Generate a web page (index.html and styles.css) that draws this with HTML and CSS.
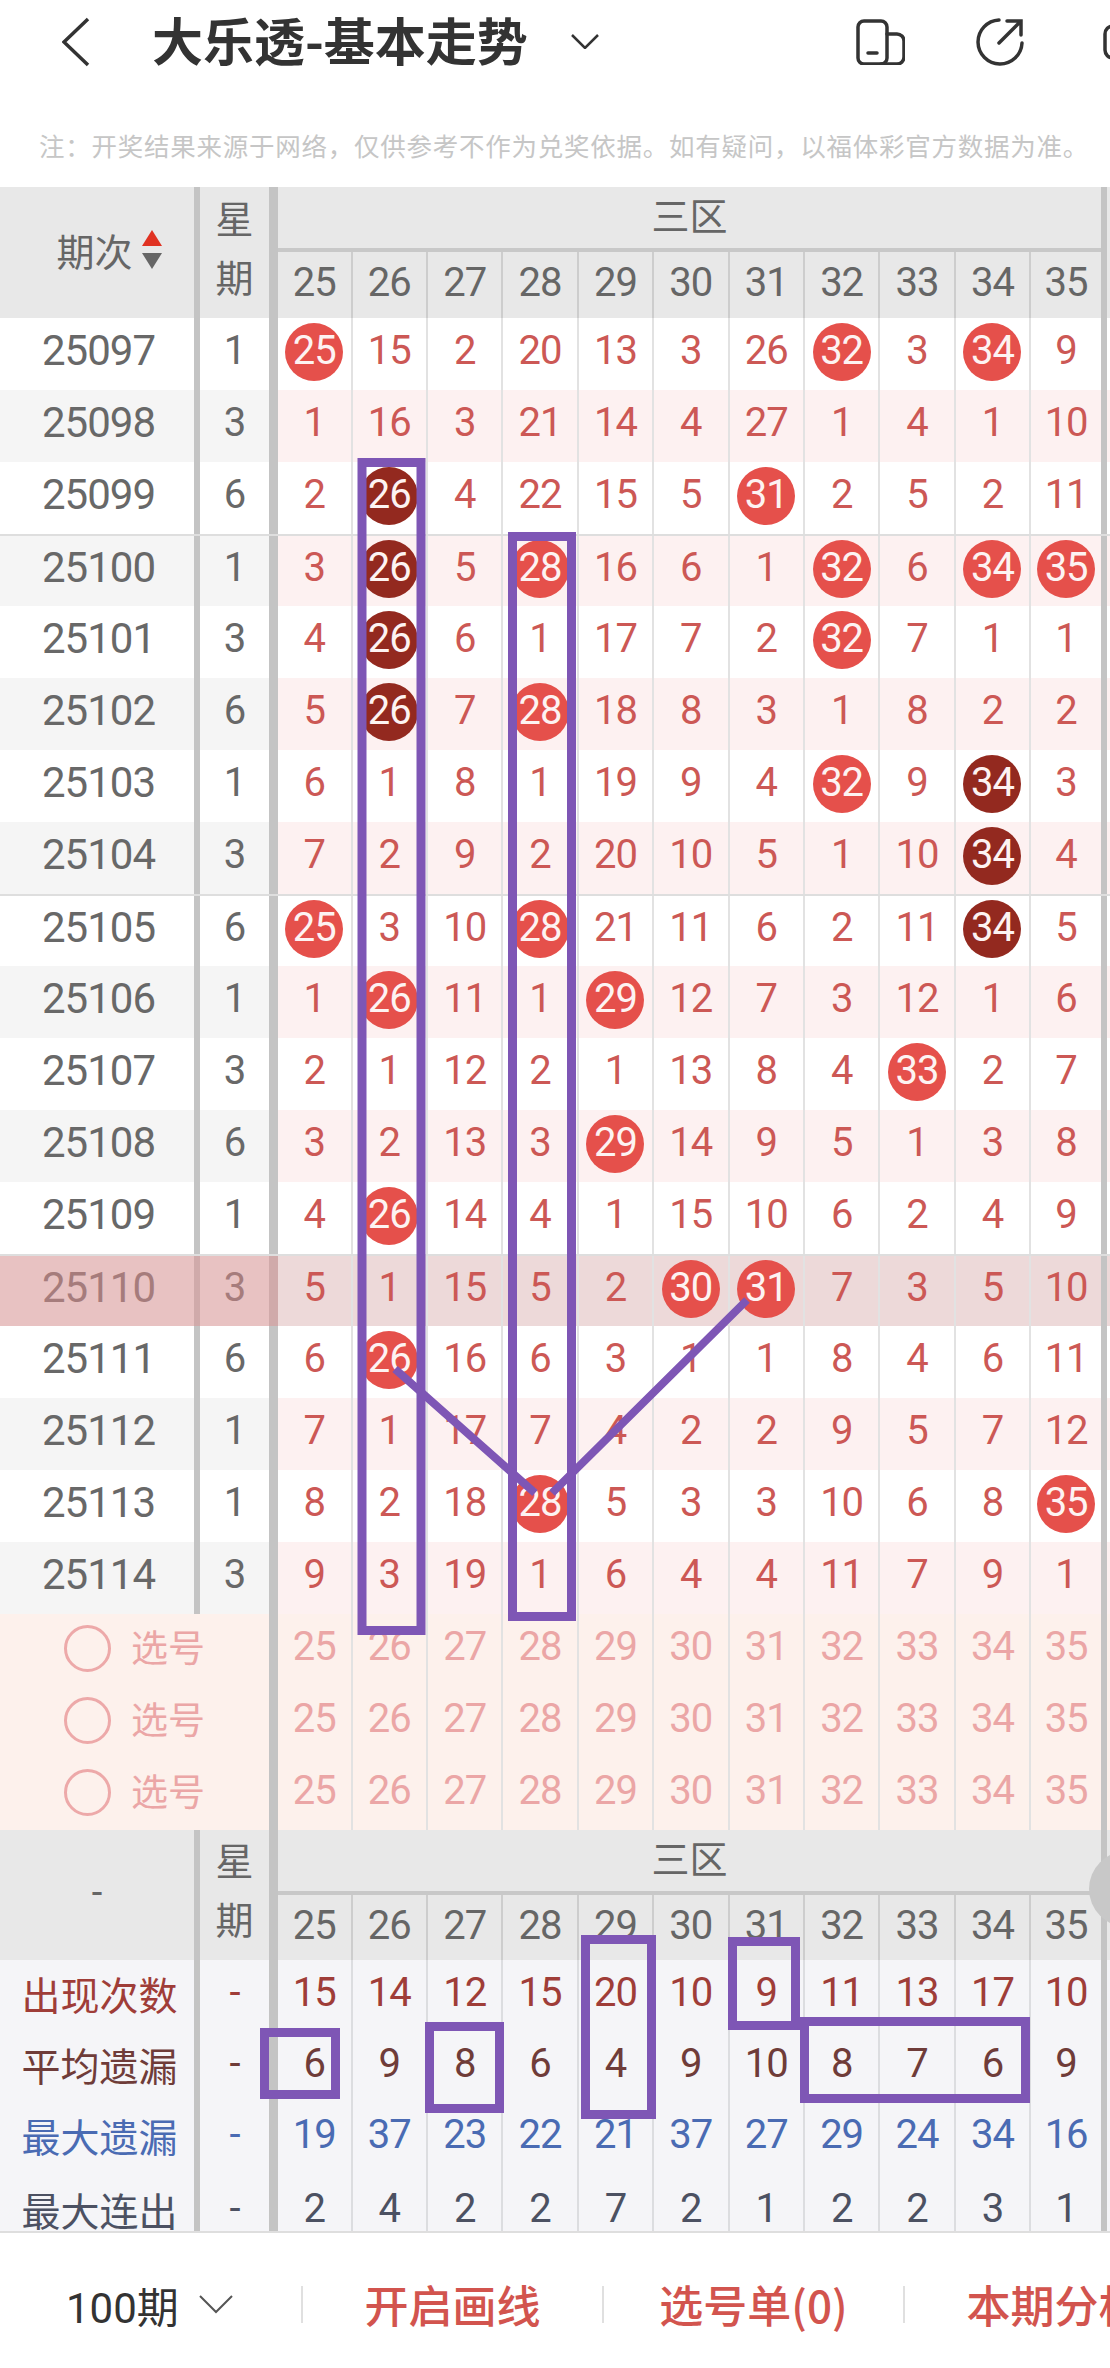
FILE: index.html
```html
<!DOCTYPE html>
<html lang="zh-CN">
<head>
    <meta charset="UTF-8">
    <meta name="viewport" content="width=device-width, initial-scale=1.0">
    <title>大乐透-基本走势</title>
    <link rel="stylesheet" href="styles.css">
</head>
<body>
<div class="page">
    <header class="topbar">
        <svg class="back" viewBox="0 0 28 50"><path d="M26 2 2 25l24 23"/></svg>
        <h1>大乐透-基本走势</h1>
        <svg class="title-arrow" viewBox="0 0 30 16"><path d="M2 2l13 13L28 2"/></svg>
        <div class="actions">
            <svg class="ico-split" viewBox="0 0 50 46"><rect x="3" y="2" width="29" height="43" rx="6"/><path d="M32 15h10a7 7 0 0 1 7 7v16a7 7 0 0 1-7 7H26M13 34h9"/></svg>
            <svg class="ico-share" viewBox="0 0 50 48"><path d="M24 2a22 22 0 1 0 23 23"/><path d="M24 25 46 3M32 3h14v14"/></svg>
            <svg class="ico-more" viewBox="0 0 40 46"><rect x="2" y="7" width="50" height="32" rx="8"/></svg>
        </div>
    </header>
    <p class="note">注：开奖结果来源于网络，仅供参考不作为兑奖依据。如有疑问，以福体彩官方数据为准。</p>

    <section class="chart">
        <div class="thead">
            <div class="th-period">期次<span class="sort"><i class="up"></i><i class="down"></i></span></div>
            <div class="th-week"><span>星</span><span>期</span></div>
            <div class="th-zone">
                <div class="zone-name">三区</div>
                <div class="zone-nums"><span>25</span><span>26</span><span>27</span><span>28</span><span>29</span><span>30</span><span>31</span><span>32</span><span>33</span><span>34</span><span>35</span></div>
            </div>
        </div>

        <div class="row"><span class="per">25097</span><span class="wk">1</span><span><b class="ball">25</b></span><span>15</span><span>2</span><span>20</span><span>13</span><span>3</span><span>26</span><span><b class="ball">32</b></span><span>3</span><span><b class="ball">34</b></span><span>9</span></div>
        <div class="row alt"><span class="per">25098</span><span class="wk">3</span><span>1</span><span>16</span><span>3</span><span>21</span><span>14</span><span>4</span><span>27</span><span>1</span><span>4</span><span>1</span><span>10</span></div>
        <div class="row"><span class="per">25099</span><span class="wk">6</span><span>2</span><span><b class="ball dark">26</b></span><span>4</span><span>22</span><span>15</span><span>5</span><span><b class="ball">31</b></span><span>2</span><span>5</span><span>2</span><span>11</span></div>
        <div class="row alt rule"><span class="per">25100</span><span class="wk">1</span><span>3</span><span><b class="ball dark">26</b></span><span>5</span><span><b class="ball">28</b></span><span>16</span><span>6</span><span>1</span><span><b class="ball">32</b></span><span>6</span><span><b class="ball">34</b></span><span><b class="ball">35</b></span></div>
        <div class="row"><span class="per">25101</span><span class="wk">3</span><span>4</span><span><b class="ball dark">26</b></span><span>6</span><span>1</span><span>17</span><span>7</span><span>2</span><span><b class="ball">32</b></span><span>7</span><span>1</span><span>1</span></div>
        <div class="row alt"><span class="per">25102</span><span class="wk">6</span><span>5</span><span><b class="ball dark">26</b></span><span>7</span><span><b class="ball">28</b></span><span>18</span><span>8</span><span>3</span><span>1</span><span>8</span><span>2</span><span>2</span></div>
        <div class="row"><span class="per">25103</span><span class="wk">1</span><span>6</span><span>1</span><span>8</span><span>1</span><span>19</span><span>9</span><span>4</span><span><b class="ball">32</b></span><span>9</span><span><b class="ball dark">34</b></span><span>3</span></div>
        <div class="row alt"><span class="per">25104</span><span class="wk">3</span><span>7</span><span>2</span><span>9</span><span>2</span><span>20</span><span>10</span><span>5</span><span>1</span><span>10</span><span><b class="ball dark">34</b></span><span>4</span></div>
        <div class="row rule"><span class="per">25105</span><span class="wk">6</span><span><b class="ball">25</b></span><span>3</span><span>10</span><span><b class="ball">28</b></span><span>21</span><span>11</span><span>6</span><span>2</span><span>11</span><span><b class="ball dark">34</b></span><span>5</span></div>
        <div class="row alt"><span class="per">25106</span><span class="wk">1</span><span>1</span><span><b class="ball">26</b></span><span>11</span><span>1</span><span><b class="ball">29</b></span><span>12</span><span>7</span><span>3</span><span>12</span><span>1</span><span>6</span></div>
        <div class="row"><span class="per">25107</span><span class="wk">3</span><span>2</span><span>1</span><span>12</span><span>2</span><span>1</span><span>13</span><span>8</span><span>4</span><span><b class="ball">33</b></span><span>2</span><span>7</span></div>
        <div class="row alt"><span class="per">25108</span><span class="wk">6</span><span>3</span><span>2</span><span>13</span><span>3</span><span><b class="ball">29</b></span><span>14</span><span>9</span><span>5</span><span>1</span><span>3</span><span>8</span></div>
        <div class="row"><span class="per">25109</span><span class="wk">1</span><span>4</span><span><b class="ball">26</b></span><span>14</span><span>4</span><span>1</span><span>15</span><span>10</span><span>6</span><span>2</span><span>4</span><span>9</span></div>
        <div class="row cur"><span class="per">25110</span><span class="wk">3</span><span>5</span><span>1</span><span>15</span><span>5</span><span>2</span><span><b class="ball">30</b></span><span><b class="ball">31</b></span><span>7</span><span>3</span><span>5</span><span>10</span></div>
        <div class="row"><span class="per">25111</span><span class="wk">6</span><span>6</span><span><b class="ball">26</b></span><span>16</span><span>6</span><span>3</span><span>1</span><span>1</span><span>8</span><span>4</span><span>6</span><span>11</span></div>
        <div class="row alt"><span class="per">25112</span><span class="wk">1</span><span>7</span><span>1</span><span>17</span><span>7</span><span>4</span><span>2</span><span>2</span><span>9</span><span>5</span><span>7</span><span>12</span></div>
        <div class="row"><span class="per">25113</span><span class="wk">1</span><span>8</span><span>2</span><span>18</span><span><b class="ball">28</b></span><span>5</span><span>3</span><span>3</span><span>10</span><span>6</span><span>8</span><span><b class="ball">35</b></span></div>
        <div class="row alt"><span class="per">25114</span><span class="wk">3</span><span>9</span><span>3</span><span>19</span><span>1</span><span>6</span><span>4</span><span>4</span><span>11</span><span>7</span><span>9</span><span>1</span></div>

        <div class="row pick"><span class="pick-btn"><i class="radio"></i>选号</span><span>25</span><span>26</span><span>27</span><span>28</span><span>29</span><span>30</span><span>31</span><span>32</span><span>33</span><span>34</span><span>35</span></div>
        <div class="row pick"><span class="pick-btn"><i class="radio"></i>选号</span><span>25</span><span>26</span><span>27</span><span>28</span><span>29</span><span>30</span><span>31</span><span>32</span><span>33</span><span>34</span><span>35</span></div>
        <div class="row pick"><span class="pick-btn"><i class="radio"></i>选号</span><span>25</span><span>26</span><span>27</span><span>28</span><span>29</span><span>30</span><span>31</span><span>32</span><span>33</span><span>34</span><span>35</span></div>

        <div class="thead thead-foot">
            <div class="th-period">-</div>
            <div class="th-week"><span>星</span><span>期</span></div>
            <div class="th-zone">
                <div class="zone-name">三区</div>
                <div class="zone-nums"><span>25</span><span>26</span><span>27</span><span>28</span><span>29</span><span>30</span><span>31</span><span>32</span><span>33</span><span>34</span><span>35</span></div>
            </div>
        </div>

        <div class="row stat times"><span class="per">出现次数</span><span class="wk">-</span><span>15</span><span>14</span><span>12</span><span>15</span><span>20</span><span>10</span><span>9</span><span>11</span><span>13</span><span>17</span><span>10</span></div>
        <div class="row stat avg"><span class="per">平均遗漏</span><span class="wk">-</span><span>6</span><span>9</span><span>8</span><span>6</span><span>4</span><span>9</span><span>10</span><span>8</span><span>7</span><span>6</span><span>9</span></div>
        <div class="row stat miss"><span class="per">最大遗漏</span><span class="wk">-</span><span>19</span><span>37</span><span>23</span><span>22</span><span>21</span><span>37</span><span>27</span><span>29</span><span>24</span><span>34</span><span>16</span></div>
        <div class="row stat streak"><span class="per">最大连出</span><span class="wk">-</span><span>2</span><span>4</span><span>2</span><span>2</span><span>7</span><span>2</span><span>1</span><span>2</span><span>2</span><span>3</span><span>1</span></div>
    </section>

    <footer class="bottombar">
        <div class="range">100期<svg class="range-arrow" viewBox="0 0 34 20"><path d="M1 2l16 16L33 2"/></svg></div>
        <i class="bar-line"></i>
        <a class="tab">开启画线</a>
        <i class="bar-line"></i>
        <a class="tab">选号单(0)</a>
        <i class="bar-line"></i>
        <a class="tab">本期分析</a>
    </footer>

    <!-- hand drawn marks on top of the screenshot -->
    <svg class="marks" viewBox="0 0 1110 2368">
        <rect x="362" y="462.5" width="59" height="1168"/>
        <rect x="512.5" y="536.5" width="59" height="1080"/>
        <path d="M395 1369 535 1493M552 1493 747 1300"/>
        <rect x="264.5" y="2032.5" width="71" height="62"/>
        <rect x="429.5" y="2026.5" width="70" height="82"/>
        <rect x="585.5" y="1939.5" width="66" height="175"/>
        <rect x="732.5" y="1941.5" width="63" height="84"/>
        <rect x="804.5" y="2021.5" width="221" height="77"/>
    </svg>
    <div class="scroll-thumb"></div>
</div>
</body>
</html>
```

FILE: styles.css
```css
* {
    box-sizing: border-box;
}

body {
    margin: 0;
    background-color: #fff;
    font-family: Roboto, "Noto Sans CJK SC", sans-serif;
}

.page {
    position: relative;
    width: 1110px;
    height: 2368px;
    overflow: hidden;
}

/* top bar */
.topbar {
    display: flex;
    align-items: center;
    height: 84px;
    padding-left: 62px;
}

.topbar svg {
    fill: none;
    stroke: #333;
    flex: none;
}

.back {
    width: 28px;
    height: 50px;
    stroke-width: 3.5;
}

.topbar h1 {
    margin: 0 0 7px 62px;
    font-family: "Noto Sans CJK SC", sans-serif;
    font-size: 51px;
    line-height: 60px;
    font-weight: 700;
    color: #333;
    white-space: nowrap;
}

.title-arrow {
    width: 30px;
    height: 16px;
    margin: 0 0 2px 42px;
    stroke-width: 2.5;
}

.actions {
    display: flex;
    align-items: center;
    margin-left: auto;
    margin-right: -33px;
}

.ico-split,
.ico-share,
.ico-more {
    stroke-width: 3.5;
    stroke-linecap: round;
}

.ico-split {
    width: 50px;
    height: 46px;
}

.ico-share {
    width: 50px;
    height: 48px;
    margin-left: 70px;
}

.ico-more {
    width: 40px;
    height: 46px;
    margin-left: 78px;
}

.note {
    height: 103px;
    margin: 0;
    padding: 41px 0 0 39px;
    font-family: "Noto Sans CJK SC", sans-serif;
    font-size: 25.5px;
    line-height: 40px;
    letter-spacing: 0.75px;
    color: #c6c6c6;
    white-space: nowrap;
}

/* chart */
.chart {
    width: 1110px;
    font-size: 38px;
}

.thead {
    display: flex;
    height: 131px;
    background-color: #e8e8e8;
    color: #666;
    font-family: Roboto, "Noto Sans CJK SC", sans-serif;
}

.thead-foot {
    height: 130px;
}

.th-period {
    display: flex;
    align-items: center;
    justify-content: center;
    width: 200px;
    padding: 0 0 6px 24px;
    border-right: 6px solid #c4c4c4;
}

.thead-foot .th-period {
    padding-left: 0;
}

.sort {
    display: flex;
    flex-direction: column;
    gap: 7px;
    margin-left: 9px;
}

.sort i {
    width: 0;
    height: 0;
    border-left: 10px solid transparent;
    border-right: 10px solid transparent;
}

.sort .up {
    border-bottom: 16px solid #e03222;
}

.sort .down {
    border-top: 16px solid #666;
}

.th-week {
    display: flex;
    flex-direction: column;
    align-items: center;
    justify-content: center;
    width: 78px;
    padding-bottom: 6px;
    border-right: 9px solid #c4c4c4;
    line-height: 59px;
}

.th-zone {
    width: 829px;
    border-right: 6px solid #c4c4c4;
}

.zone-name {
    height: 65px;
    border-bottom: 4px solid #c8c8c8;
    text-align: center;
    line-height: 60px;
}

.zone-nums {
    display: grid;
    grid-template-columns: 72.6px repeat(9, 75.4px) 1fr;
    height: 66px;
    font-size: 40px;
    letter-spacing: -1px;
}

.zone-nums span {
    display: flex;
    align-items: center;
    justify-content: center;
    padding-bottom: 5px;
}

.zone-nums span + span {
    border-left: 2px solid #cdcdcd;
}

.thead-foot .zone-nums {
    height: 65px;
}

.row {
    display: grid;
    grid-template-columns: 200px 78px 72.6px repeat(9, 75.4px) 72px 6px;
    height: 72px;
    background-color: #fff;
    color: #cc5855;
    font-size: 40px;
    letter-spacing: -1px;
}

.row span {
    display: flex;
    align-items: center;
    justify-content: center;
    padding-bottom: 7px;
    border-left: 2px solid #e2e2e2;
}

.row .per {
    padding-left: 3px;
    font-size: 42px;
    color: #686868;
    border-left: 0;
    border-right: 6px solid #c4c4c4;
}

.row .wk {
    color: #686868;
    border-left: 0;
    border-right: 9px solid #c4c4c4;
}

.row .wk + span {
    border-left: 0;
}

/* right edge of the grid */
.row::after {
    content: "";
    background-color: #c4c4c4;
}

.row.alt {
    background-color: #fdf1f1;
}

.row.alt .per,
.row.alt .wk {
    background-color: #f5f5f5;
}

.row.rule {
    border-top: 2px solid #dedede;
}

.row.cur {
    background-color: #edd9d9;
    border-top: 2px solid #dedede;
}

.row.cur .per,
.row.cur .wk {
    background-color: #e8c2c2;
    color: #a67c7c;
    border-right-color: #d0aaaa;
}

.ball {
    display: flex;
    align-items: center;
    justify-content: center;
    flex: none;
    width: 58px;
    height: 58px;
    margin-bottom: -3px;
    padding-bottom: 4px;
    border-radius: 50%;
    background-color: #e5504b;
    color: #fdf3f2;
    font-weight: 400;
}

.ball.dark {
    background-color: #93291f;
}

/* pick rows */
.row.pick {
    grid-template-columns: 278px 72.6px repeat(9, 75.4px) 72px 6px;
    background-color: #fdf1ec;
    color: #eba6a6;
}

.row .pick-btn {
    justify-content: flex-start;
    padding-left: 64px;
    padding-bottom: 8px;
    border-left: 0;
    border-right: 9px solid #c4c4c4;
    font-family: "Noto Sans CJK SC", sans-serif;
    font-size: 37px;
    line-height: 1;
    letter-spacing: 0;
}

.row .pick-btn + span {
    border-left: 0;
}

.radio {
    width: 47px;
    height: 47px;
    margin: 5px 20px 0 0;
    border: 3px solid #eda9a9;
    border-radius: 50%;
}

/* stat rows */
.row.stat {
    height: 71px;
    background-color: #f5f5f8;
}

.row.stat span {
    padding-bottom: 6px;
    border-left-color: #dcdde0;
}

.row.stat .per {
    padding-left: 5px;
    font-family: "Noto Sans CJK SC", sans-serif;
    font-size: 39px;
    letter-spacing: 0;
    border-left: 0;
}

.row.stat .wk {
    border-left: 0;
}

.row.stat .wk + span {
    border-left: 0;
}

.row.times,
.row.times .per,
.row.times .wk {
    color: #9f3d38;
}

.row.avg,
.row.avg .per,
.row.avg .wk {
    color: #6f3c39;
}

.row.miss,
.row.miss .per,
.row.miss .wk {
    color: #4a6bb3;
}

.row.streak,
.row.streak .per,
.row.streak .wk {
    color: #4c5162;
}

/* the last row is cut by the bottom bar */
.row.stat.streak {
    height: 58px;
    grid-template-rows: 58px;
    line-height: 1;
}

.row.stat.streak span {
    padding: 14px 0 0;
}

.row.stat.streak .per {
    padding-left: 5px;
}

/* bottom bar */
.bottombar {
    display: flex;
    align-items: center;
    height: 138px;
    padding-top: 6px;
    background-color: #fff;
    border-top: 2px solid #dedede;
}

.range {
    display: flex;
    align-items: center;
    flex: none;
    width: 301px;
    padding-left: 66px;
    font-size: 42px;
    color: #333;
}

.range-arrow {
    width: 34px;
    height: 20px;
    margin-left: 20px;
    fill: none;
    stroke: #555;
    stroke-width: 2;
}

.bar-line {
    flex: none;
    width: 2px;
    height: 37px;
    background-color: #e0e0e0;
}

.tab {
    flex: none;
    width: 299px;
    text-align: center;
    font-family: "Noto Sans CJK SC", sans-serif;
    font-size: 44px;
    font-weight: 500;
    color: #d2544e;
    white-space: nowrap;
}

/* overlay drawing */
.marks {
    position: absolute;
    top: 0;
    left: 0;
    width: 1110px;
    height: 2368px;
    fill: none;
    stroke: #7e56b5;
    stroke-width: 9;
}

.marks path {
    stroke-width: 8;
}

.scroll-thumb {
    position: absolute;
    left: 1089px;
    top: 1851px;
    width: 76px;
    height: 76px;
    border-radius: 50%;
    background-color: #c8c8c8;
}
```
